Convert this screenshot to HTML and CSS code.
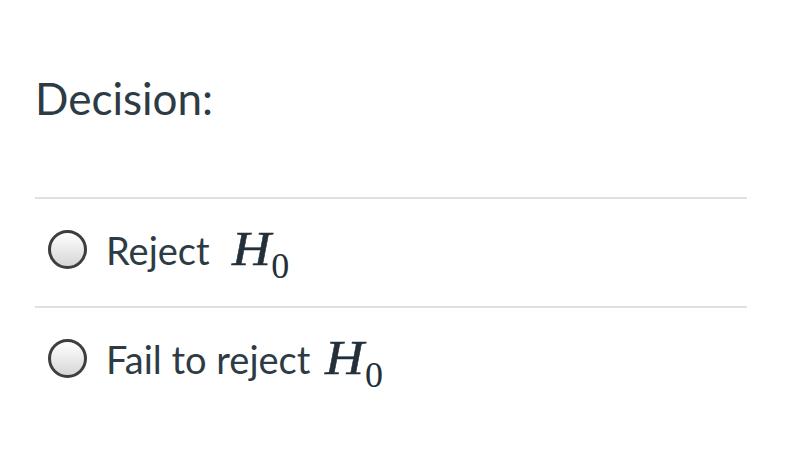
FILE: index.html
```html
<!DOCTYPE html>
<html>
<head>
<meta charset="utf-8">
<link rel="stylesheet" href="styles.css">
</head>
<body>
<div class="question">
  <div class="title">Decision:</div>
  <div class="answers">
    <label class="answer">
      <span class="radio"></span>
      <span class="label-text">Reject</span>
      <span class="math first"><i>H</i><sub>0</sub></span>
    </label>
    <label class="answer">
      <span class="radio"></span>
      <span class="label-text">Fail to reject</span>
      <span class="math"><i>H</i><sub>0</sub></span>
    </label>
  </div>
</div>
</body>
</html>
```
FILE: styles.css
```css
html, body {
  margin: 0;
  padding: 0;
  background: #ffffff;
}
body {
  font-family: Lato, "Liberation Sans", sans-serif;
  color: #2d3b45;
}
.question {
  width: 712px;
  margin-left: 35px;
  padding-top: 70px;
}
.title {
  font-size: 44px;
  line-height: 56px;
  height: 56px;
  padding-bottom: 71px;
}
.answers {
  display: flex;
  flex-direction: column;
}
.answer {
  display: flex;
  align-items: baseline;
  height: 109px;
  border-top: 2px solid #e0e0e0;
  padding-left: 13px;
  padding-top: 30px;
  font-size: 38px;
  line-height: 40px;
  box-sizing: border-box;
}
.radio {
  align-self: flex-start;
  width: 39px;
  height: 39px;
  border: 3px solid #3b3f42;
  border-radius: 50%;
  background: linear-gradient(#ffffff, #d6d6d6);
  box-sizing: border-box;
  margin-top: 1px;
  margin-right: 19px;
  flex: none;
}
.math {
  font-family: "Liberation Serif", "DejaVu Serif", serif;
  font-size: 48px;
  margin-left: 15px;
  color: #23303a;
}
.math.first {
  margin-left: 22px;
}
.math i {
  display: inline-block;
  font-style: italic;
  transform: scaleX(1.12);
  transform-origin: left;
  -webkit-text-stroke: 0.5px #23303a;
}
.math sub {
  font-size: 36px;
  vertical-align: -13px;
  margin-left: 5px;
}
```
